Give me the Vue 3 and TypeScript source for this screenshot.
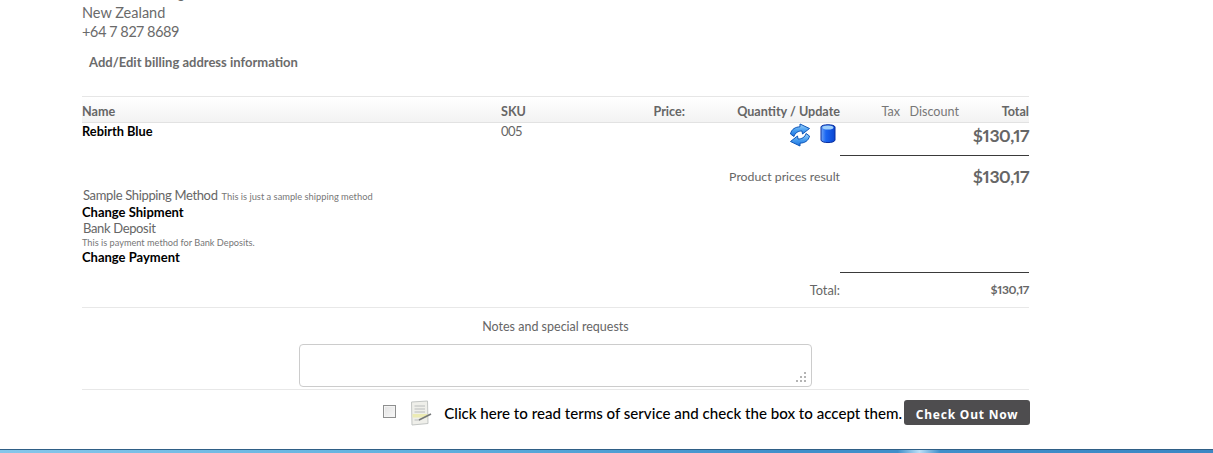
<script setup lang="ts">
interface Col { label: string; cls: string }
const cols: Col[] = [
  { label: 'Name', cls: 'c-name' },
  { label: 'SKU', cls: 'c-sku' },
  { label: 'Price:', cls: 'c-r' },
  { label: 'Quantity / Update', cls: 'c-r' },
  { label: 'Tax', cls: 'c-r' },
  { label: 'Discount', cls: 'c-r' },
  { label: 'Total', cls: 'c-r' },
]
</script>

<template>
  <div class="page">
    <main class="cart">
      <div class="address">
        <div class="clipped">Morrinsville Region</div>
        <div>New Zealand</div>
        <div class="phone">+64 7 827 8689</div>
      </div>
      <a class="edit-link">Add/Edit billing address information</a>

      <div class="grid head">
        <div v-for="c in cols" :key="c.label" :class="c.cls">{{ c.label }}</div>
      </div>

      <div class="grid item">
        <a class="black name">Rebirth Blue</a>
        <div class="sku">005</div>
        <div></div>
        <div class="icons">
          <svg class="ic-update" width="22" height="24" viewBox="0 0 22 24">
            <defs>
              <linearGradient id="bl" x1="0" y1="0" x2="0" y2="1">
                <stop offset="0" stop-color="#a2d6fb" />
                <stop offset="0.5" stop-color="#4a9ff0" />
                <stop offset="1" stop-color="#1a72e0" />
              </linearGradient>
            </defs>
            <path d="M11 1 L20.5 5.5 L13.5 11 L13 8 C9.5 8 6 9.5 5 13.5 L1.5 11 C2.5 6 6.5 4 11 3.8 Z" fill="url(#bl)" stroke="#0d55b8" stroke-width="1" stroke-linejoin="round" />
            <path d="M11 23 L1.5 18.5 L8.5 13 L9 16 C12.5 16 16 14.5 17 10.5 L20.5 13 C19.5 18 15.5 20 11 20.2 Z" fill="url(#bl)" stroke="#0d55b8" stroke-width="1" stroke-linejoin="round" />
          </svg>
          <svg class="ic-delete" width="16" height="21" viewBox="0 0 16 21">
            <defs>
              <linearGradient id="cy" x1="0" y1="0" x2="1" y2="0">
                <stop offset="0" stop-color="#6fa6f7" />
                <stop offset="0.35" stop-color="#1a66f2" />
                <stop offset="1" stop-color="#0b45d0" />
              </linearGradient>
            </defs>
            <path d="M1 4 C1 1 15 1 15 4 V17 C15 20.4 1 20.4 1 17 Z" fill="url(#cy)" stroke="#0a2f9e" stroke-width="1" />
            <ellipse cx="8" cy="4.4" rx="5.4" ry="2" fill="#9fd0fb" />
          </svg>
        </div>
        <div></div>
        <div></div>
        <div class="price">$130,17</div>
      </div>

      <div class="rule-wrap"><div class="rule"></div></div>

      <div class="result">
        <span class="result-label">Product prices result</span>
        <span class="price result-price">$130,17</span>
      </div>

      <div class="methods">
        <div class="m-line ship">
          <span class="m-title">Sample Shipping Method</span>
          <span class="m-desc">This is just a sample shipping method</span>
        </div>
        <a class="black strong">Change Shipment</a>
        <div class="m-line bank"><span class="m-title">Bank Deposit</span></div>
        <div class="m-desc block">This is payment method for Bank Deposits.</div>
        <a class="black strong">Change Payment</a>
      </div>

      <div class="rule-wrap total-rule"><div class="rule"></div></div>

      <div class="total-row">
        <span class="total-label">Total:</span>
        <span class="total-val">$130,17</span>
      </div>

      <section class="notes">
        <div class="notes-label">Notes and special requests</div>
        <div class="notes-field">
          <textarea class="notes-box" aria-label="Notes and special requests"></textarea>
          <svg class="grip" width="12" height="12" viewBox="0 0 12 12" fill="#b4b4b4">
            <rect x="9" y="1" width="2" height="2" />
            <rect x="5" y="5" width="2" height="2" />
            <rect x="9" y="5" width="2" height="2" />
            <rect x="1" y="9" width="2" height="2" />
            <rect x="5" y="9" width="2" height="2" />
            <rect x="9" y="9" width="2" height="2" />
          </svg>
        </div>
      </section>

      <div class="checkout">
        <input type="checkbox" class="tos-check" aria-label="Accept terms" />
        <svg class="tos-icon" width="24" height="26" viewBox="0 0 24 26">
          <path d="M2.5 2 L18.5 1 L19 23.5 L3 25 Z" fill="#efefea" stroke="#c3c6c4" />
          <path d="M5.5 6 H16 M5.5 9 H16 M5.5 12 H16" stroke="#b9bcbc" stroke-width="1" />
          <rect x="3.5" y="14" width="15" height="3.5" fill="#ecebb4" />
          <path d="M5.5 20 H11" stroke="#b9bcbc" />
          <path d="M10 20 L22 14" stroke="#76797a" stroke-width="1.8" />
        </svg>
        <a class="black tos-text">Click here to read terms of service and check the box to accept them.</a>
        <button class="checkout-btn" type="button">Check Out Now</button>
      </div>
    </main>
    <footer class="strip"></footer>
  </div>
</template>

<style>
html, body { margin: 0; background: #fff; overflow: hidden; }
</style>

<style scoped>
.page {
  width: 1213px;
  height: 453px;
  display: flex;
  flex-direction: column;
  overflow: hidden;
  font-family: "Lato", "Noto Sans", sans-serif;
  font-variant-numeric: proportional-nums;
  color: #666;
}
.cart {
  flex: 1;
  width: 947px;
  margin-left: 82px;
  min-height: 0;
}
.address {
  font-size: 14.5px;
  line-height: 19.5px;
  margin-top: -17px;
  color: #6a6a6a;
}
.phone { letter-spacing: -0.35px; }
.clipped { white-space: nowrap; }
.edit-link {
  display: block;
  margin: 10px 0 0 7px;
  font-size: 13px;
  line-height: 20px;
  font-weight: 700;
  color: #6b6b6b;
}
.grid {
  display: grid;
  grid-template-columns: 419px 120px 64px 155px 60px 59px 70px;
}
.head {
  margin-top: 24px;
  height: 27px;
  line-height: 30px;
  box-sizing: border-box;
  font-size: 12.6px;
  font-weight: 700;
  color: #666;
  border-top: 1px solid #e6e6e6;
  border-bottom: 1px solid #e2e2e2;
  background: linear-gradient(#fff, #f3f3f3);
}
.c-r { text-align: right; }
.head .c-r:nth-child(5), .head .c-r:nth-child(6) { font-weight: 400; color: #777; font-size: 12.6px; }
.black { color: #000; }
.name { font-size: 12.8px; font-weight: 700; line-height: 17px; }
.sku { font-size: 13px; line-height: 17px; color: #666; letter-spacing: -0.5px; font-variant-numeric: lining-nums; }
.item { height: 32px; }
.icons {
  display: flex;
  justify-content: flex-end;
  align-items: flex-start;
  gap: 9px;
  padding-right: 4px;
  padding-top: 0;
}
.price {
  text-align: right;
  font-size: 17.5px;
  font-weight: 700;
  line-height: 26px;
  color: #666;
  letter-spacing: -0.4px;
}
.rule-wrap {
  display: flex;
  justify-content: flex-end;
}
.rule {
  width: 189px;
  height: 1px;
  background: #3a3a3a;
}
.result {
  display: flex;
  justify-content: space-between;
  align-items: center;
  margin-top: 8px;
  height: 26px;
  padding-left: 647px;
  box-sizing: border-box;
}
.result-label {
  width: 111px;
  font-size: 12.3px;
  white-space: nowrap;
  text-align: right;
  color: #666;
}
.methods {
  margin-top: -2px;
  font-size: 13px;
  line-height: 16px;
}
.m-line { padding-left: 1px; line-height: 16px; }
.m-line.ship { line-height: 14px; white-space: nowrap; }
.m-line.bank { line-height: 17px; }
.m-title { font-size: 13px; color: #666; letter-spacing: -0.35px; }
.m-desc { font-size: 9.3px; color: #777; margin-left: 4px; }
.m-desc.block { margin-left: 0; line-height: 12px; font-size: 9.2px; }
.strong { display: block; font-weight: 700; line-height: 16px; }
.total-rule { margin-top: 7px; }
.total-row {
  display: flex;
  align-items: center;
  justify-content: flex-end;
  height: 34px;
  border-bottom: 1px solid #e8e8e8;
}
.total-label {
  font-size: 12.8px;
  color: #666;
}
.total-val {
  width: 189px;
  text-align: right;
  font-size: 12px;
  font-weight: 700;
  color: #666;
  letter-spacing: -0.3px;
}
.notes {
  display: flex;
  flex-direction: column;
  align-items: center;
  border-bottom: 1px solid #e8e8e8;
  padding-bottom: 2px;
}
.notes-label {
  margin-top: 9px;
  font-size: 12.5px;
  line-height: 20px;
  color: #666;
}
.notes-field {
  position: relative;
  margin-top: 7px;
}
.notes-box {
  display: block;
  box-sizing: border-box;
  width: 513px;
  height: 43px;
  border: 1px solid #ccc;
  border-radius: 4px;
  background: #fff;
  resize: none;
}
.grip {
  position: absolute;
  right: 5px;
  bottom: 4px;
}
.checkout {
  display: flex;
  align-items: center;
  justify-content: flex-end;
  margin-top: 10px;
  margin-right: -1px;
  height: 26px;
}
.tos-check {
  appearance: none;
  box-sizing: border-box;
  width: 13px;
  height: 13px;
  margin: 0 13px 0 0;
  border: 1px solid #8e8f8f;
  background: linear-gradient(135deg, #e2e2e2, #f8f8f8);
  box-shadow: inset 0 0 0 1px #f4f4f4;
  position: relative;
  top: -1px;
}
.tos-icon { margin-right: 11px; }
.tos-text {
  font-size: 15.1px;
  font-weight: 500;
  white-space: nowrap;
  margin-right: 2px;
}
.checkout-btn {
  width: 126px;
  height: 25px;
  border: none;
  border-radius: 3px;
  background: #4e4d4f;
  color: #fff;
  font-family: "Noto Sans", sans-serif;
  font-size: 12px;
  font-weight: 700;
  letter-spacing: 0.8px;
  padding: 3px 0 0;
}
.strip {
  height: 4px;
  flex: none;
  border-top: 1px solid #2f5f86;
  box-sizing: border-box;
  background: linear-gradient(90deg, #86c6ea 0%, #5fb0de 35%, #3f8fca 65%, #3f8fca 74%, #bcdff7 75.8%, #3f8fca 77.5%, #3b87c4 100%);
}
</style>
